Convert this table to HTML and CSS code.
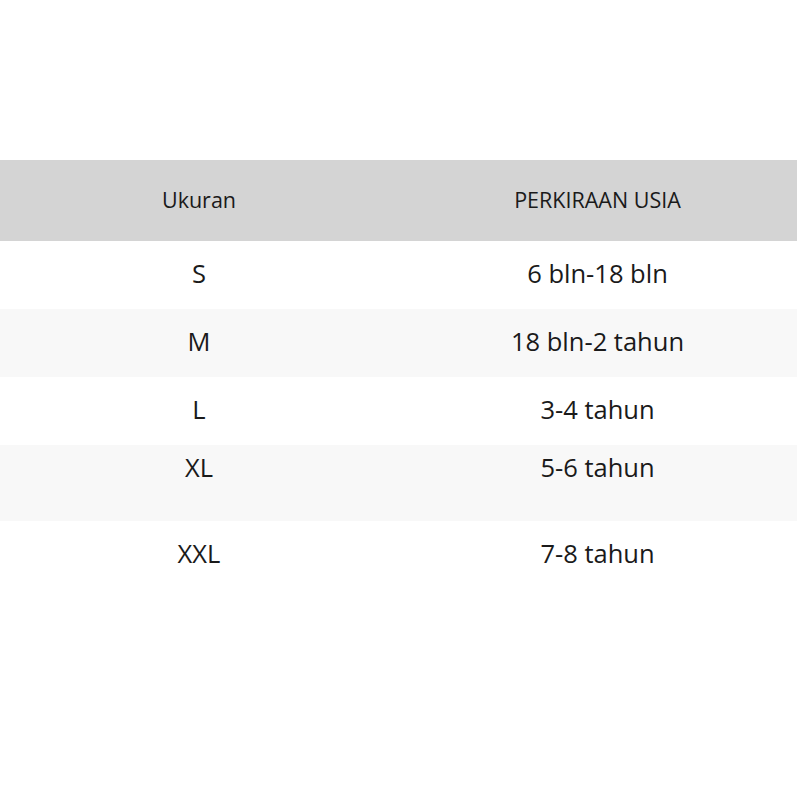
FILE: index.html
```html
<!DOCTYPE html>
<html lang="id">
<head>
<meta charset="utf-8">
<title>Ukuran</title>
<link rel="stylesheet" href="styles.css">
</head>
<body>
<div class="page">
  <div class="size-table">
    <div class="row head">
      <div class="cell">Ukuran</div>
      <div class="cell">PERKIRAAN USIA</div>
    </div>
    <div class="row">
      <div class="cell">S</div>
      <div class="cell">6 bln-18 bln</div>
    </div>
    <div class="row alt">
      <div class="cell">M</div>
      <div class="cell">18 bln-2 tahun</div>
    </div>
    <div class="row">
      <div class="cell">L</div>
      <div class="cell">3-4 tahun</div>
    </div>
    <div class="row alt tall">
      <div class="cell">XL</div>
      <div class="cell">5-6 tahun</div>
    </div>
    <div class="row">
      <div class="cell">XXL</div>
      <div class="cell">7-8 tahun</div>
    </div>
  </div>
</div>
</body>
</html>
```
FILE: styles.css
```css
html, body {
  margin: 0;
  padding: 0;
  background: #ffffff;
}
.page {
  width: 797px;
  padding-top: 160px;
  color: #1a1a1a;
  font-family: "Open Sans", "Noto Sans", sans-serif;
}
.size-table {
  display: flex;
  flex-direction: column;
}
.row {
  display: grid;
  grid-template-columns: 398px 399px;
  height: 68px;
  box-sizing: border-box;
  padding-top: 14px;
}
.row.head {
  background: #d4d4d4;
  height: 81px;
  padding-top: 25px;
}
.row.alt {
  background: #f8f8f8;
}
.row.tall {
  height: 76px;
  padding-top: 4px;
}
.cell {
  text-align: center;
  font-size: 25.5px;
  line-height: 36px;
}
.head .cell {
  font-size: 21.5px;
  line-height: 30px;
}
```
